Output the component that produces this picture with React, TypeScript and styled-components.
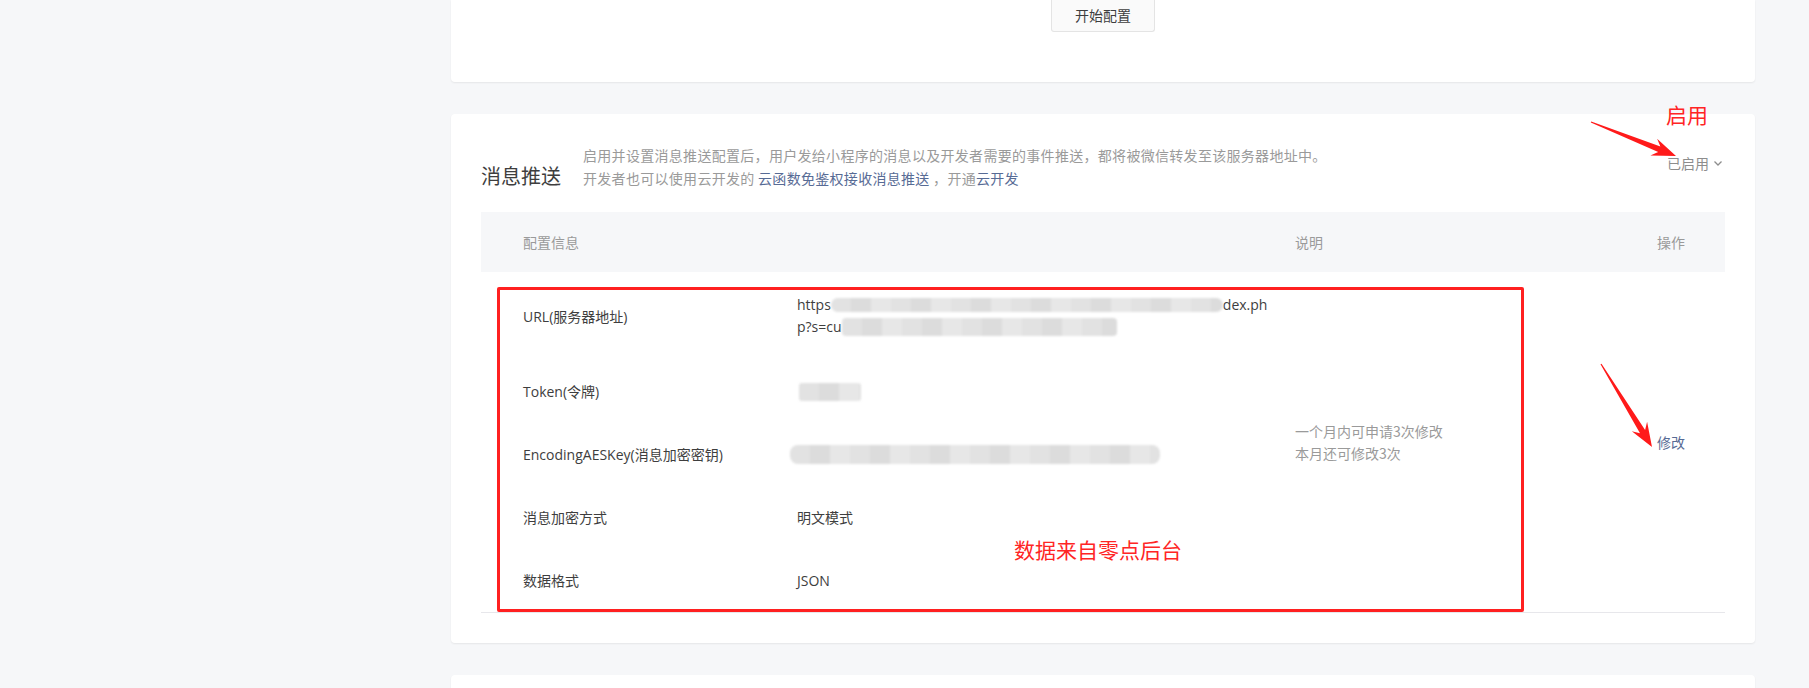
import React from 'react';
import styled, { createGlobalStyle } from 'styled-components';

const GlobalStyle = createGlobalStyle`
  html, body {
    margin: 0;
    padding: 0;
    background: #f6f7f9;
    font-family: "Open Sans", "Noto Sans CJK SC", sans-serif;
    color: #3e3e3e;
    overflow: hidden;
  }
`;

const Page = styled.div`
  position: relative;
  display: flex;
  width: 1809px;
  height: 688px;
  overflow: hidden;
`;

const Sidebar = styled.div`
  width: 451px;
  flex: none;
`;

const Main = styled.div`
  width: 1304px;
  display: flex;
  flex-direction: column;
  gap: 32px;
`;

const Card = styled.div<{ $height?: number }>`
  background: #fff;
  border-radius: 4px;
  box-shadow: 0 1px 2px rgba(0, 0, 0, 0.07);
  ${p => (p.$height ? `height: ${p.$height}px;` : '')}
  flex: none;
`;

const TopCard = styled(Card)`
  display: flex;
  justify-content: center;
  align-items: flex-start;
  border-radius: 0 0 4px 4px;
`;

const PlainButton = styled.button`
  width: 104px;
  height: 32px;
  border: 1px solid #e4e4e4;
  border-top: none;
  border-radius: 0 0 3px 3px;
  background: #fafafa;
  color: #3e3e3e;
  font-family: "Noto Sans CJK SC", sans-serif;
  font-size: 14px;
  padding: 0 0 2px;
`;

const Section = styled(Card)`
  padding: 30px 30px 30px;
`;

const SectionHead = styled.div`
  display: flex;
  align-items: flex-end;
  margin-bottom: 22px;
`;

const Title = styled.h2`
  margin: 0;
  width: 102px;
  font-size: 20px;
  line-height: 28px;
  font-weight: normal;
  font-family: "Noto Sans CJK SC", sans-serif;
  color: #3e3e3e;
  flex: none;
`;

const Intro = styled.div`
  flex: 1;
  font-family: "Noto Sans CJK SC", sans-serif;
  font-size: 14px;
  letter-spacing: 0.3px;
  line-height: 23px;
  color: #9a9a9a;
`;

const Link = styled.a`
  color: #576b95;
  text-decoration: none;
`;

const Status = styled.div`
  align-self: flex-start;
  margin-top: 8px;
  margin-right: 2px;
  display: flex;
  align-items: center;
  gap: 4px;
  font-family: "Noto Sans CJK SC", sans-serif;
  font-size: 14px;
  line-height: 22px;
  color: #8d8d8d;
`;

const Table = styled.div`
  display: grid;
  grid-template-columns: 316px 498px 1fr 140px;
  border-bottom: 1px solid #e7e7eb;
`;

const HeadCell = styled.div<{ $right?: boolean; $first?: boolean }>`
  background: #f6f7f9;
  height: 60px;
  display: flex;
  align-items: center;
  justify-content: ${p => (p.$right ? 'flex-end' : 'flex-start')};
  padding-left: ${p => (p.$first ? '42px' : '0')};
  padding-right: ${p => (p.$right ? '40px' : '0')};
  font-family: "Noto Sans CJK SC", sans-serif;
  font-size: 14px;
  color: #9a9a9a;
`;

const LabelCell = styled.div<{ $row: number; $pad: number }>`
  grid-column: 1;
  grid-row: ${p => p.$row};
  padding: ${p => p.$pad}px 0 ${p => p.$pad}px 42px;
  display: flex;
  align-items: center;
  font-size: 14px;
  line-height: 23px;
  color: #3e3e3e;
`;

const ValueCell = styled.div<{ $row: number; $pad: number }>`
  grid-column: 2;
  grid-row: ${p => p.$row};
  padding: ${p => p.$pad}px 0;
  display: flex;
  flex-direction: column;
  justify-content: center;
  font-size: 14px;
  line-height: 22px;
  color: #3e3e3e;
`;

const Line = styled.div`
  display: flex;
  align-items: center;
  white-space: nowrap;
`;

const Blur = styled.span<{ $w: number; $h: number; $shift?: number; $radius?: number }>`
  display: inline-block;
  width: ${p => p.$w}px;
  height: ${p => p.$h}px;
  margin-left: ${p => p.$shift ?? 0}px;
  border-radius: ${p => p.$radius ?? p.$h / 2}px;
  background: repeating-linear-gradient(
    90deg,
    #e2e2e2 0px,
    #e2e2e2 20px,
    #dcdcdc 20px,
    #dcdcdc 40px,
    #e7e7e7 40px,
    #e7e7e7 60px
  );
  filter: blur(1px);
`;

const SpanCell = styled.div<{ $col: number; $right?: boolean }>`
  grid-column: ${p => p.$col};
  grid-row: 2 / span 5;
  align-self: center;
  text-align: ${p => (p.$right ? 'right' : 'left')};
  padding-right: ${p => (p.$right ? '40px' : '0')};
  font-family: "Noto Sans CJK SC", sans-serif;
  font-size: 14px;
  line-height: 22px;
  color: #9a9a9a;
`;

const Note = styled.div<{ $size: number }>`
  position: absolute;
  font-family: "Noto Sans CJK SC", sans-serif;
  font-size: ${p => p.$size}px;
  line-height: 1;
  color: #ff2525;
  white-space: nowrap;
`;

const RedFrame = styled.div`
  position: absolute;
  left: 497px;
  top: 287px;
  width: 1021px;
  height: 319px;
  border: 3px solid #ff2020;
  border-radius: 2px;
  pointer-events: none;
`;

const Overlay = styled.svg`
  position: absolute;
  left: 0;
  top: 0;
  pointer-events: none;
`;

const arrow = (x1: number, y1: number, x2: number, y2: number) => {
  const dx = x2 - x1;
  const dy = y2 - y1;
  const len = Math.hypot(dx, dy);
  const ux = dx / len;
  const uy = dy / len;
  const nx = -uy;
  const ny = ux;
  const headLen = 24;
  const bx = x2 - ux * headLen;
  const by = y2 - uy * headLen;
  const notchX = x2 - ux * (headLen - 6);
  const notchY = y2 - uy * (headLen - 6);
  const pts: [number, number][] = [
    [x1 + nx * 0.6, y1 + ny * 0.6],
    [notchX + nx * 3, notchY + ny * 3],
    [bx + nx * 9, by + ny * 9],
    [x2, y2],
    [bx - nx * 9, by - ny * 9],
    [notchX - nx * 3, notchY - ny * 3],
    [x1 - nx * 0.6, y1 - ny * 0.6],
  ];
  return pts.map(p => `${p[0].toFixed(1)},${p[1].toFixed(1)}`).join(' ');
};

const Chevron = () => (
  <svg width="10" height="10" viewBox="0 0 10 10">
    <path d="M1.5 3.5 L5 7 L8.5 3.5" fill="none" stroke="#8d8d8d" strokeWidth="1.3" />
  </svg>
);

const App: React.FC = () => {
  return (
    <Page>
      <GlobalStyle />
      <Sidebar />
      <Main>
        <TopCard $height={82}>
          <PlainButton>开始配置</PlainButton>
        </TopCard>

        <Section>
          <SectionHead>
            <Title>消息推送</Title>
            <Intro>
              <div>启用并设置消息推送配置后，用户发给小程序的消息以及开发者需要的事件推送，都将被微信转发至该服务器地址中。</div>
              <div>
                开发者也可以使用云开发的 <Link>云函数免鉴权接收消息推送</Link> ，开通<Link>云开发</Link>
              </div>
            </Intro>
            <Status>
              已启用
              <Chevron />
            </Status>
          </SectionHead>

          <Table>
            <HeadCell $first>配置信息</HeadCell>
            <HeadCell />
            <HeadCell>说明</HeadCell>
            <HeadCell $right>操作</HeadCell>

            <LabelCell $row={2} $pad={22}>URL(服务器地址)</LabelCell>
            <ValueCell $row={2} $pad={22}>
              <Line>
                https<Blur $w={392} $h={14} />dex.ph
              </Line>
              <Line>
                p?s=cu<Blur $w={275} $h={18} $radius={4} />
              </Line>
            </ValueCell>

            <LabelCell $row={3} $pad={20}>Token(令牌)</LabelCell>
            <ValueCell $row={3} $pad={20}>
              <Line>
                <Blur $w={62} $h={18} $radius={3} $shift={2} />
              </Line>
            </ValueCell>

            <LabelCell $row={4} $pad={20}>EncodingAESKey(消息加密密钥)</LabelCell>
            <ValueCell $row={4} $pad={20}>
              <Line>
                <Blur $w={370} $h={19} $shift={-7} $radius={8} />
              </Line>
            </ValueCell>

            <LabelCell $row={5} $pad={20}>消息加密方式</LabelCell>
            <ValueCell $row={5} $pad={20}>明文模式</ValueCell>

            <LabelCell $row={6} $pad={20}>数据格式</LabelCell>
            <ValueCell $row={6} $pad={20}>JSON</ValueCell>

            <SpanCell $col={3}>
              <div>一个月内可申请3次修改</div>
              <div>本月还可修改3次</div>
            </SpanCell>
            <SpanCell $col={4} $right>
              <Link>修改</Link>
            </SpanCell>
          </Table>
        </Section>

        <Card $height={200} />
      </Main>

      <RedFrame />
      <Note $size={21} style={{ left: 1666, top: 104 }}>启用</Note>
      <Note $size={21} style={{ left: 1014, top: 539 }}>数据来自零点后台</Note>
      <Overlay width={1809} height={688}>
        <polygon points={arrow(1591, 122, 1676, 156)} fill="#ff1a1a" />
        <polygon points={arrow(1601, 364, 1652, 447)} fill="#ff1a1a" />
      </Overlay>
    </Page>
  );
};

export default App;
